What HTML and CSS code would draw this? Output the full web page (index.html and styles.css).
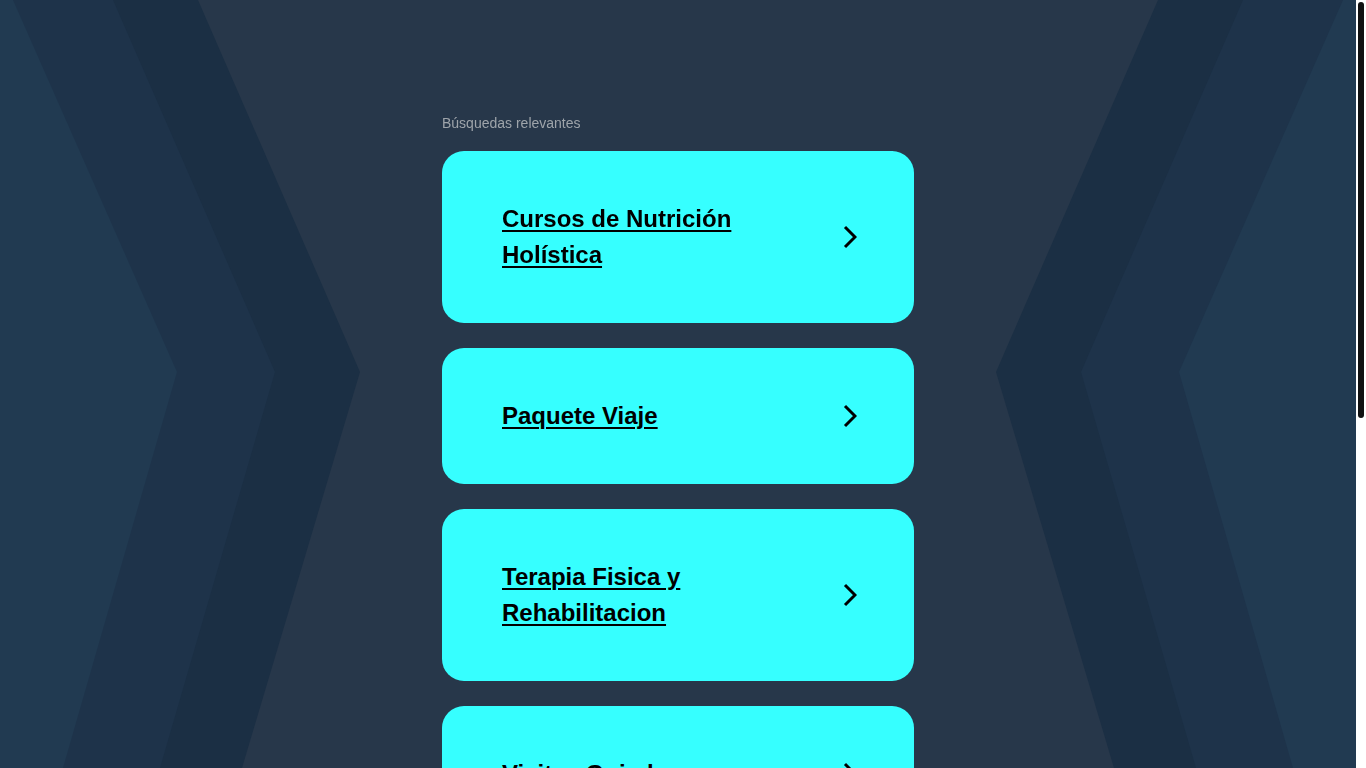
FILE: index.html
```html
<!DOCTYPE html>
<html lang="es">
<head>
<meta charset="utf-8">
<title>Búsquedas relevantes</title>
<link rel="stylesheet" href="styles.css">
</head>
<body>
<svg class="bg" viewBox="0 0 1356 768" preserveAspectRatio="none" aria-hidden="true">
  <polygon class="b3" points="0,0 198,0 360,372 242,768 0,768"/>
  <polygon class="b2" points="0,0 113,0 275,372 160,768 0,768"/>
  <polygon class="b1" points="0,0 13,0 177,372 63,768 0,768"/>
  <polygon class="b3" points="1356,0 1158,0 996,372 1114,768 1356,768"/>
  <polygon class="b2" points="1356,0 1243,0 1081,372 1196,768 1356,768"/>
  <polygon class="b1" points="1356,0 1343,0 1179,372 1293,768 1356,768"/>
</svg>
<div class="frame">
  <main class="page">
    <div class="label">Búsquedas relevantes</div>
    <ul class="list">
      <li class="card"><a class="link" href="#">Cursos de Nutrición Holística</a><svg class="chev" viewBox="0 0 14 24"><polyline points="2,2 12,12 2,22"/></svg></li>
      <li class="card"><a class="link" href="#">Paquete Viaje</a><svg class="chev" viewBox="0 0 14 24"><polyline points="2,2 12,12 2,22"/></svg></li>
      <li class="card"><a class="link" href="#">Terapia Fisica y Rehabilitacion</a><svg class="chev" viewBox="0 0 14 24"><polyline points="2,2 12,12 2,22"/></svg></li>
      <li class="card"><a class="link" href="#">Visitas Guiadas</a><svg class="chev" viewBox="0 0 14 24"><polyline points="2,2 12,12 2,22"/></svg></li>
    </ul>
  </main>
</div>
<div class="scrollbar" aria-hidden="true"><div class="thumb"></div></div>
</body>
</html>
```
FILE: styles.css
```css
html { background: #27374a; }
body {
  margin: 0;
  font-family: "Liberation Sans", Arial, sans-serif;
  color: #000;
}
::-webkit-scrollbar { width: 0; height: 0; }
.bg {
  position: fixed;
  top: 0; left: 0;
  width: calc(100% - 10px);
  height: 100vh;
  z-index: 0;
  display: block;
}
.b1 { fill: #213a51; }
.b2 { fill: #1e334a; }
.b3 { fill: #1b2f44; }
.frame {
  position: relative;
  z-index: 1;
  margin-right: 10px;
}
.page {
  width: 472px;
  margin: 0 auto;
  padding: 115px 0 0;
  min-height: 1404px;
  box-sizing: border-box;
}
.label {
  font-size: 14px;
  line-height: 16px;
  color: #9ea4aa;
  margin-bottom: 20px;
}
.list {
  list-style: none;
  margin: 0;
  padding: 0;
  display: flex;
  flex-direction: column;
  gap: 25px;
}
.card {
  background: #36ffff;
  border-radius: 22px;
  padding: 50px 57px 50px 60px;
  display: flex;
  align-items: center;
  justify-content: space-between;
}
.link {
  font-size: 24px;
  line-height: 36px;
  font-weight: bold;
  color: #000;
  text-decoration: underline;
  text-decoration-thickness: 2px;
  text-underline-offset: 3px;
  max-width: 300px;
}
.chev {
  width: 14px;
  height: 24px;
  flex: none;
}
.chev polyline {
  fill: none;
  stroke: #000;
  stroke-width: 3;
}
.scrollbar {
  position: fixed;
  top: 0; right: 0;
  width: 10px;
  height: 100vh;
  background: #fff;
  z-index: 2;
  padding: 2px;
  box-sizing: border-box;
}
.thumb {
  height: 416px;
  background: #111;
  border-radius: 3px;
}
```
